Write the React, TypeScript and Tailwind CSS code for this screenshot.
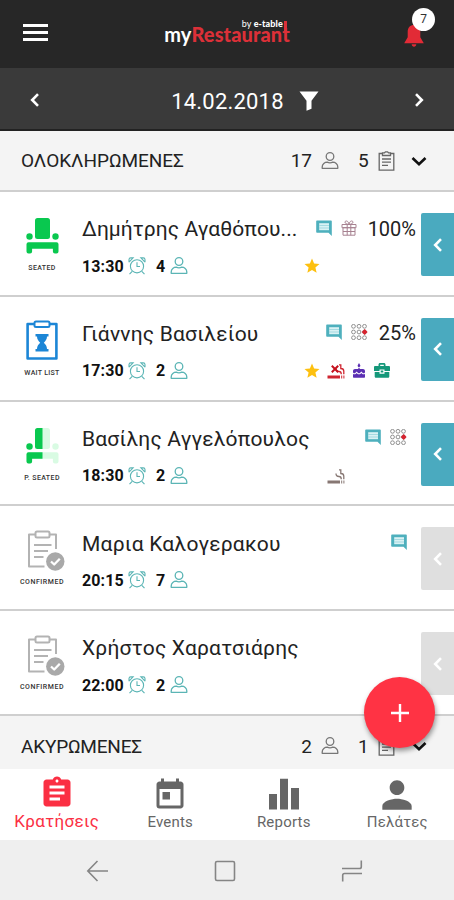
import type { ReactNode } from "react";
import clsx from "clsx";
import { MdAssignment, MdCake, MdPerson, MdStar, MdToday } from "react-icons/md";

type Status = "seated" | "waitlist" | "partial" | "confirmed";
type Flag = "comment" | "gift" | "tables";
type Tag = "star" | "noSmoking" | "smoking" | "cake" | "business" | "none";

interface Reservation {
  name: string;
  nameClass: string;
  time: string;
  guests: number;
  status: Status;
  flags: Flag[];
  percent?: string;
  tags: Tag[];
  active: boolean;
}

const reservations: Reservation[] = [
  {
    name: "Δημήτρης Αγαθόπου...",
    nameClass: "tracking-[0.08px]",
    time: "13:30",
    guests: 4,
    status: "seated",
    flags: ["comment", "gift"],
    percent: "100%",
    tags: ["star"],
    active: true,
  },
  {
    name: "Γιάννης Βασιλείου",
    nameClass: "tracking-[0.2px]",
    time: "17:30",
    guests: 2,
    status: "waitlist",
    flags: ["comment", "tables"],
    percent: "25%",
    tags: ["star", "noSmoking", "cake", "business"],
    active: true,
  },
  {
    name: "Βασίλης Αγγελόπουλος",
    nameClass: "tracking-[0.2px]",
    time: "18:30",
    guests: 2,
    status: "partial",
    flags: ["comment", "tables"],
    tags: ["none", "smoking"],
    active: true,
  },
  {
    name: "Μαρια Καλογερακου",
    nameClass: "tracking-[0.22px]",
    time: "20:15",
    guests: 7,
    status: "confirmed",
    flags: ["comment"],
    tags: [],
    active: false,
  },
  {
    name: "Χρήστος Χαρατσιάρης",
    nameClass: "tracking-[0.2px]",
    time: "22:00",
    guests: 2,
    status: "confirmed",
    flags: [],
    tags: [],
    active: false,
  },
];

const statusLabels: Record<Status, { text: string; className: string }> = {
  seated: { text: "SEATED", className: "tracking-[0.35px]" },
  waitlist: { text: "WAIT LIST", className: "tracking-[0.3px]" },
  partial: { text: "P. SEATED", className: "tracking-[0.4px]" },
  confirmed: { text: "CONFIRMED", className: "tracking-[0.55px]" },
};

function GuestIcon({ className }: { className?: string }) {
  return (
    <svg viewBox="0 0 18 18" fill="none" stroke="currentColor" strokeWidth="1.3" className={className}>
      <circle cx="9" cy="4.5" r="3.8" />
      <path d="M1.2 16.3V15c0-3 2.600-4.800 5-4.800 1 .5 1.800.7 2.800.7s1.800-.2 2.800-.7c2.400 0 5 1.800 5 4.800v1.300z" strokeLinejoin="round" />
    </svg>
  );
}

function AlarmIcon() {
  return (
    <svg viewBox="0 0 18 18" fill="none" stroke="currentColor" strokeWidth="1.1" className="h-[18px] w-[18px] text-[#5bb5b5]">
      <circle cx="9" cy="9.3" r="6.6" />
      <path d="M9 5.3v4.2h3" />
      <path d="M1 5.2V2.5A1.7 1.7 0 0 1 2.7.9h2.4L1 5.2M17 5.2V2.5A1.7 1.7 0 0 0 15.3.9h-2.4L17 5.2" />
      <path d="M4.2 14.3 1.5 17.2M13.8 14.3l2.7 2.9" />
    </svg>
  );
}

function ClipboardIcon({ className }: { className?: string }) {
  return (
    <svg viewBox="0 0 17 20" fill="none" stroke="currentColor" strokeWidth="1.3" className={className}>
      <path d="M4.5 2.5H1.2v16.7h14.6V2.5h-3.3" />
      <path d="M4.5 1.8h2L7.5.8h2l1 1h2v2.7h-8z" />
      <path d="M4 8h9M4 11.2h9M4 14.4h6" />
    </svg>
  );
}

function SmokingIcon({ className }: { className?: string }) {
  return (
    <svg viewBox="0 0 18 16" fill="none" stroke="currentColor" className={className}>
      <path d="M.5 14h12.500M14.200 14h1M16.400 14h1" strokeWidth="2.800" />
      <path d="M9 5.500c0 2.300 1.200 3 3 3 1.700 0 2.300.8 2.300 2.700M12 1.800h1.800v3.700c2 0 3 .9 3 2.700v3" strokeWidth="1.300" />
    </svg>
  );
}

function Chair() {
  return (
    <>
      <rect x="9" y="0" width="15" height="21" rx="2.5" />
      <circle cx="3.5" cy="18.5" r="3.2" />
      <circle cx="29.5" cy="18.5" r="3.2" />
      <path d="M2.5 24.3h28a2 2 0 0 1 2 2v7.2a2 2 0 0 1-2 2h-1.6a2 2 0 0 1-2-2v-2.7H6.1v2.7a2 2 0 0 1-2 2H2.5a2 2 0 0 1-2-2v-7.2a2 2 0 0 1 2-2z" />
    </>
  );
}

function StatusIcon({ status }: { status: Status }) {
  if (status === "seated") {
    return (
      <svg viewBox="0 0 33 36" className="h-9 w-[33px] fill-[#09c84f]">
        <Chair />
      </svg>
    );
  }

  if (status === "partial") {
    return (
      <svg viewBox="0 0 33 36" className="h-9 w-[33px]">
        <defs>
          <clipPath id="left-half">
            <rect width="16.5" height="36" />
          </clipPath>
        </defs>
        <g fill="#d9fbe3">
          <Chair />
        </g>
        <g fill="#09c84f" clipPath="url(#left-half)">
          <Chair />
        </g>
      </svg>
    );
  }

  if (status === "waitlist") {
    return (
      <svg viewBox="0 0 32 40" fill="none" stroke="#1c86d6" strokeWidth="2.6" strokeLinejoin="round" className="h-10 w-8">
        <path d="M8.5 4H1.6v34.5h28.8V4h-6.9" />
        <rect x="8.5" y="1.5" width="15" height="5.5" rx="1.5" strokeWidth="2" />
        <path d="M9.5 14h13v2.5H21c0 3-1.6 4.5-3.2 6.2 1.6 1.7 3.2 3.2 3.2 6.2h1.5v2.5h-13v-2.5H11c0-3 1.6-4.5 3.2-6.2-1.6-1.7-3.2-3.2-3.2-6.2H9.5z" fill="#1c86d6" stroke="none" />
      </svg>
    );
  }

  return (
    <svg viewBox="0 0 38 42" fill="none" stroke="#b3b3b3" strokeWidth="2" strokeLinejoin="round" className="h-[42px] w-[38px]">
      <path d="M8.5 4.5H2v32h15.5M22.5 4.5H29V19" />
      <rect x="8.5" y="1.5" width="14" height="6" rx="1.5" />
      <path d="M7 15h17.5M7 21h14M7 27h9.5" />
      <circle cx="28.3" cy="31.5" r="9.2" fill="#a9a9a9" stroke="none" />
      <path d="m24 31.5 3.2 3 5.6-5.8" stroke="#fff" strokeWidth="2.3" />
    </svg>
  );
}

function FlagIcon({ flag }: { flag: Flag }) {
  if (flag === "comment") {
    return (
      <svg viewBox="0 0 16 16" className="h-4 w-4">
        <path d="M1 .5h14a.8.8 0 0 1 .8.8V16l-3.3-3.2H1a.8.8 0 0 1-.8-.8V1.3A.8.8 0 0 1 1 .5z" fill="#4eb0bd" />
        <path d="M3.2 3.2h9.8v7H3.2z" fill="#d9f2f4" />
        <path d="M3.2 5.5h9.800M3.2 8h9.800" stroke="#8fd0d8" strokeWidth=".7" />
      </svg>
    );
  }

  if (flag === "gift") {
    return (
      <svg viewBox="0 0 16 16" fill="none" stroke="#a78291" strokeWidth="1" className="h-4 w-4">
        <path d="M1 4.5h14v3.2H1zM2 7.7h12v7.5H2zM6.2 4.5v10.700M9.8 4.5v10.700M2 11.5h12" />
        <path d="M8 4.3C5.5 4.3 4 3.3 4 2.2 4 .4 7.3.2 8 4.3c.7-4.1 4-3.9 4-2.1 0 1.1-1.5 2.1-4 2.1z" />
      </svg>
    );
  }

  return (
    <svg viewBox="0 0 17 16" fill="none" stroke="#858585" strokeWidth=".9" className="h-4 w-[17px]">
      {[2.3, 8, 13.7].map((y) =>
        [2.5, 8, 13.5].map((x) => <circle key={`${x}-${y}`} cx={x} cy={y} r="1.9" />)
      )}
      <path d="m13.7 5 2.900 3-2.900 3-2.900-3z" fill="#d8232f" stroke="none" />
    </svg>
  );
}

function TagIcon({ tag }: { tag: Tag }) {
  switch (tag) {
    case "star":
      return <MdStar className="h-[18px] w-[18px] text-[#fdc010]" />;
    case "smoking":
      return <SmokingIcon className="h-4 w-[18px] text-[#877773]" />;
    case "noSmoking":
      return (
        <span className="relative block">
          <SmokingIcon className="h-4 w-[18px] text-[#cf2530]" />
          <svg viewBox="0 0 8 8" stroke="#c5121e" strokeWidth="2" className="absolute top-[2px] left-[4px] h-2 w-2">
            <path d="m.8.8 6.4 6.4M7.2.8.8 7.2" />
          </svg>
        </span>
      );
    case "cake":
      return <MdCake className="h-4 w-4 text-[#5b2fb3]" />;
    case "business":
      return (
        <svg viewBox="0 0 16 15" className="h-[15px] w-4 fill-[#15987a]">
          <path d="M4.5 3V1.6C4.5.7 5.2 0 6.1 0h3.8c.9 0 1.6.7 1.6 1.600V3h3.300c.7 0 1.200.5 1.200 1.200V8h-5.500V6.500h-5V8H0V4.200C0 3.500.5 3 1.200 3zM6.200 3h3.600V1.700H6.200z" />
          <path d="M.7 9h4.800v1.700h5V9h4.800v4.500c0 .8-.6 1.300-1.300 1.300H2c-.7 0-1.300-.5-1.300-1.300z" />
          <path d="M6.700 7.500h2.600v2H6.700z" />
        </svg>
      );
    default:
      return null;
  }
}

function Chevron({ d, className }: { d: string; className: string }) {
  return (
    <svg viewBox="0 0 16 16" fill="none" stroke="currentColor" strokeWidth="2.6" className={className}>
      <path d={d} />
    </svg>
  );
}

const LEFT = "M11 2.2 5.2 8l5.8 5.8";
const RIGHT = "M5 2.2 10.8 8 5 13.8";
const DOWN = "M1.5 5 8 11.3 14.5 5";

function SectionHeader({ title, guests, bookings, className, titleClass }: {
  title: string;
  guests: number;
  bookings: number;
  className: string;
  titleClass: string;
}) {
  return (
    <div className={clsx("flex shrink-0 items-center bg-[#f4f4f4] pr-[27px] pl-[21px] text-[#222]", className)}>
      <h2 className={clsx("flex-1 pt-[2px] text-[19px]", titleClass)}>{title}</h2>
      <span className="pt-[2px] text-[19px]">{guests}</span>
      <GuestIcon className="ml-[9px] h-[18px] w-[18px] text-[#777]" />
      <span className="ml-[19px] w-[11px] pt-[2px] text-[19px]">{bookings}</span>
      <ClipboardIcon className="ml-[9px] h-5 w-[17px] text-[#666]" />
      <Chevron d={DOWN} className="ml-[16px] h-4 w-4 text-[#111]" />
    </div>
  );
}

function ReservationRow({ item }: { item: Reservation }) {
  const label = statusLabels[item.status];

  return (
    <li className="flex min-h-0 flex-1 border-b-2 border-[#cfcfcf] bg-white">
      {/* Status */}
      <div className="flex w-[82px] shrink-0 flex-col items-center pl-[2px]">
        <div
          className={clsx(
            "flex h-[68px] items-end",
            item.status === "confirmed" && "pb-[2px] pl-[7px]",
            item.status === "waitlist" && "pb-[5px]",
            (item.status === "seated" || item.status === "partial") && "pb-[6px]"
          )}
        >
          <StatusIcon status={item.status} />
        </div>
        <span className={clsx("mt-[3px] text-[7px] leading-[10px] font-medium whitespace-nowrap text-[#333]", label.className)}>
          {label.text}
        </span>
      </div>

      {/* Guest details */}
      <div className="min-w-0 flex-1 pt-[21px]">
        <div className="flex h-8 items-center">
          <span className={clsx("pt-[2px] text-[21px] whitespace-nowrap text-[#222]", item.nameClass)}>{item.name}</span>
          <div className={clsx("mb-[3px] ml-auto flex items-center gap-[9px]", item.percent ? "pr-[5px]" : "pr-[14px]")}>
            {item.flags.map((flag) => (
              <FlagIcon key={flag} flag={flag} />
            ))}
            {item.percent && <span className="mt-[2px] ml-[2px] text-[20px] leading-5 text-[#222]">{item.percent}</span>}
          </div>
        </div>
        <div className="mt-[10px] flex h-[22px] items-center">
          <span className="w-[46px] pt-px text-[16px] font-bold tracking-[0.1px] text-[#111]">{item.time}</span>
          <AlarmIcon />
          <span className="ml-[10px] w-[14px] pt-px text-[16px] font-bold text-[#111]">{item.guests}</span>
          <GuestIcon className="h-[18px] w-[18px] text-[#5bb5b5]" />
          <div className="ml-auto grid w-[122px] grid-cols-[25px_24px_22px_23px]">
            {item.tags.map((tag) => (
              <span key={tag} className="flex items-center justify-center">
                <TagIcon tag={tag} />
              </span>
            ))}
          </div>
        </div>
      </div>

      <button
        className={clsx(
          "mt-[21px] flex h-[63px] w-[33px] shrink-0 items-center justify-center rounded-l-[2px] text-white",
          item.active ? "bg-[#4aaabf]" : "bg-[#dfdfdf]"
        )}
      >
        <Chevron d={LEFT} className="h-4 w-4" />
      </button>
    </li>
  );
}

function NavItem({ icon, label, active }: { icon: ReactNode; label: string; active?: boolean }) {
  return (
    <a className={clsx("flex flex-1 flex-col items-center pt-[7px]", active ? "text-[#fb2f43]" : "text-[#666]")}>
      <span className="flex h-[34px] items-center">{icon}</span>
      <span className={clsx("whitespace-nowrap", active ? "text-[17px] leading-[22px] tracking-[0.35px]" : "text-[15px] leading-[24px] tracking-[0.2px]")}>
        {label}
      </span>
    </a>
  );
}

export default function App() {
  return (
    <div className="relative flex h-[900px] w-[454px] flex-col overflow-hidden bg-white font-[Roboto,sans-serif]">
      {/* App bar */}
      <header className="flex h-[68px] shrink-0 items-center justify-between bg-[#272727] px-[23px]">
        <div className="mb-[3px] flex w-[25px] flex-col gap-[4px]">
          <span className="h-[3px] bg-white" />
          <span className="h-[3px] bg-white" />
          <span className="h-[3px] bg-white" />
        </div>
        <div className="relative ml-[2px] font-[Lato,sans-serif] text-[20px] leading-6 font-bold tracking-[0.1px] text-white">
          my<span className="font-black text-[#dc3038]">Restaurant</span>
          <span className="absolute -top-[4px] right-[7px] text-[9px] leading-3 font-normal whitespace-nowrap">
            by <b className="font-black">e-table</b>
          </span>
          <span className="absolute -top-[1px] right-[3px] h-3 w-[3px] bg-[#dc3038]" />
        </div>
        <div className="relative mt-[3px] w-[27px]">
          <svg viewBox="0 0 20 22" className="h-[22px] w-5 fill-[#e22b36]">
            <path d="M10 0c3.8 0 6.3 2.7 6.3 6.5v5.7l3.5 6.1H.2l3.5-6.1V6.5C3.7 2.7 6.2 0 10 0zM7.7 19.3h4.6c0 1.5-1 2.5-2.3 2.5s-2.3-1-2.3-2.5z" />
          </svg>
          <span className="absolute -top-[17px] left-[8px] flex h-[23px] w-[23px] items-center justify-center rounded-full bg-white text-[12px] text-[#333]">
            7
          </span>
        </div>
      </header>

      {/* Date picker */}
      <div className="flex h-[63px] shrink-0 items-center border-b-2 border-[#222] bg-[#3a3a3a] px-[27px] pt-[3px] text-white">
        <Chevron d={LEFT} className="h-4 w-4" />
        <div className="flex flex-1 items-center justify-center gap-[15px] pt-px pl-[36px]">
          <span className="pt-[2px] text-[22px] tracking-[0.2px]">14.02.2018</span>
          <svg viewBox="0 0 20 20" className="h-5 w-5 fill-white">
            <path d="M.5.5h19l-7 9.2v8l-5 2.1V9.700z" />
          </svg>
        </div>
        <Chevron d={RIGHT} className="h-4 w-4" />
      </div>

      <SectionHeader
        title="ΟΛΟΚΛΗΡΩΜΕΝΕΣ"
        guests={17}
        bookings={5}
        className="h-[61px] border-b-2 border-[#cfcfcf]"
        titleClass="tracking-[-0.05px]"
      />
      <ul className="flex h-[524px] shrink-0 flex-col">
        {reservations.map((item) => (
          <ReservationRow key={item.name} item={item} />
        ))}
      </ul>
      <SectionHeader
        title="ΑΚΥΡΩΜΕΝΕΣ"
        guests={2}
        bookings={1}
        className="h-[53px] pt-[7px]"
        titleClass="tracking-[-0.2px]"
      />

      {/* Tabs */}
      <nav className="flex h-[71px] shrink-0 bg-white">
        <NavItem active label="Κρατήσεις" icon={<MdAssignment className="h-9 w-9" />} />
        <NavItem label="Events" icon={<MdToday className="mt-[3px] h-9 w-9" />} />
        <NavItem
          label="Reports"
          icon={
            <svg viewBox="0 0 32 32" className="mt-[2px] h-8 w-8 fill-current">
              <path d="M1 16h8v15.5H1zM12 .8h8v30.700h-8zM23 10h8v21.500h-8z" />
            </svg>
          }
        />
        <NavItem label="Πελάτες" icon={<MdPerson className="mt-[3px] h-11 w-11" />} />
      </nav>

      {/* Android buttons */}
      <div className="flex h-[60px] shrink-0 items-center justify-between bg-[#efefef] pt-[2px] pr-[91px] pl-[86px] text-[#858585]">
        <svg viewBox="0 0 22 22" fill="none" stroke="currentColor" strokeWidth="1.6" className="h-[22px] w-[22px]">
          <path d="M22 11H2.5M11.5 1 1.8 11l9.7 10" />
        </svg>
        <svg viewBox="0 0 22 22" fill="none" stroke="currentColor" strokeWidth="1.6" className="h-[22px] w-[22px]">
          <rect x="1.5" y="1.5" width="19" height="19" rx="1.5" />
        </svg>
        <svg viewBox="0 0 22 22" fill="none" stroke="currentColor" strokeWidth="1.6" className="h-[22px] w-[22px]">
          <path d="M1 8.5h17.5c1.2 0 1.8-.6 1.8-1.8V.5M21 13.5H3.5c-1.2 0-1.8.6-1.8 1.8v6.2" />
        </svg>
      </div>

      <button className="absolute top-[677px] left-[364px] flex h-[71px] w-[71px] items-center justify-center rounded-full bg-[#ff3344] shadow-[1px_3px_5px_rgba(0,0,0,0.4)]">
        <svg viewBox="0 0 18 18" stroke="#fff" strokeWidth="2.4" className="h-[18px] w-[18px]">
          <path d="M9 0v18M0 9h18" />
        </svg>
      </button>
    </div>
  );
}
